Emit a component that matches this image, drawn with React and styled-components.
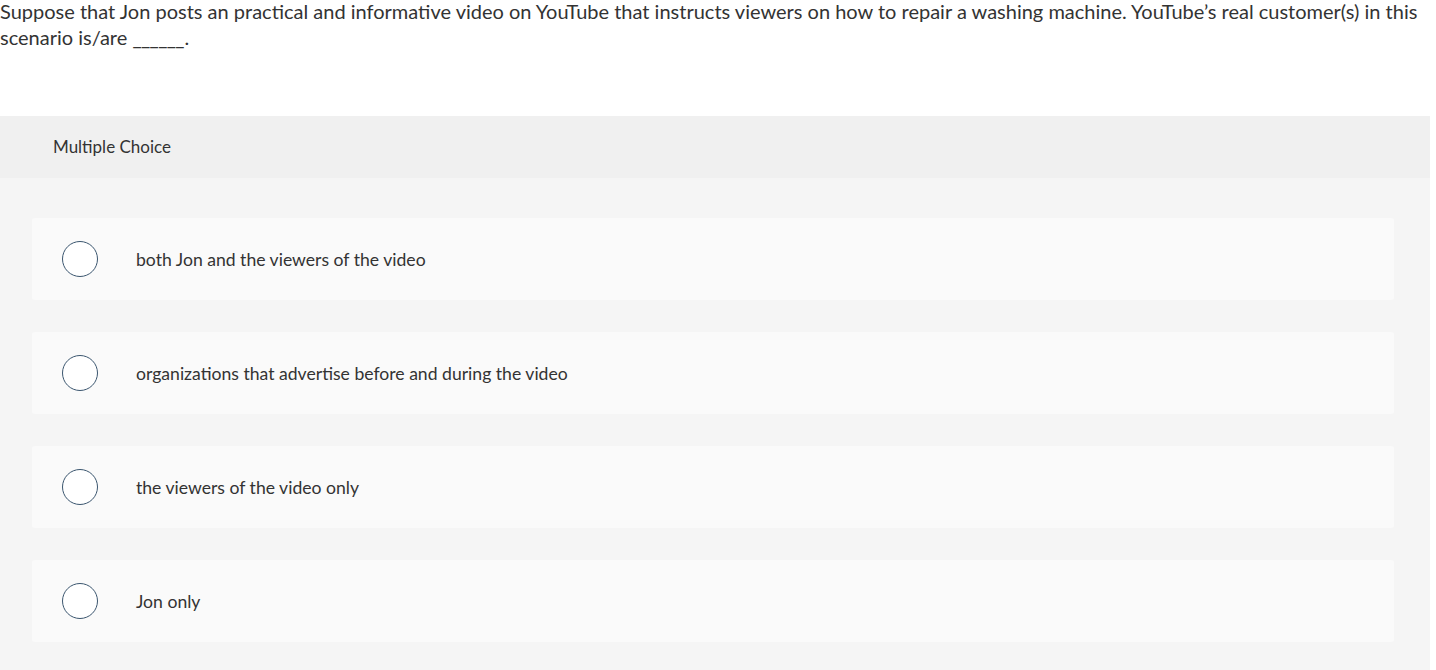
import React from "react";
import styled, { createGlobalStyle } from "styled-components";

const GlobalStyle = createGlobalStyle`
  html, body {
    margin: 0;
    padding: 0;
    background: #fff;
  }
  body {
    font-family: Lato, "Open Sans", Arial, sans-serif;
    color: #333;
  }
`;

const options = [
  "both Jon and the viewers of the video",
  "organizations that advertise before and during the video",
  "the viewers of the video only",
  "Jon only",
];

export default function App() {
  return (
    <>
      <GlobalStyle />
      <Page>
        <Question>
          Suppose that Jon posts an practical and informative video on YouTube that instructs viewers
          on how to repair a washing machine. YouTube’s real customer(s) in this{" "}
          <NoWrap>
            scenario is/are <Blank>______</Blank>.
          </NoWrap>
        </Question>
        <Panel>
          <PanelHeader>Multiple Choice</PanelHeader>
          <OptionList>
            {options.map((text) => (
              <Option key={text}>
                <Radio />
                <OptionText>{text}</OptionText>
              </Option>
            ))}
          </OptionList>
        </Panel>
      </Page>
    </>
  );
}

const Page = styled.div`
  width: 1436px;
  height: 670px;
  overflow: hidden;
`;

const Question = styled.p`
  margin: -2px 0 0;
  width: 1430px;
  height: 118px;
  font-size: 20px;
  line-height: 26px;
  color: #333;
`;

const NoWrap = styled.span`
  white-space: nowrap;
`;

const Blank = styled.span`
  letter-spacing: -0.6px;
  margin-right: 0.6px;
`;

const Panel = styled.div`
  width: 1430px;
  background: #f5f5f5;
  padding-bottom: 40px;
`;

const PanelHeader = styled.div`
  height: 60px;
  padding-bottom: 2px;
  background: #f0f0f0;
  display: flex;
  align-items: center;
  padding-left: 53px;
  font-size: 17px;
  color: #333;
`;

const OptionList = styled.div`
  display: flex;
  flex-direction: column;
  gap: 32px;
  padding: 40px 36px 0 32px;
`;

const Option = styled.div`
  height: 82px;
  background: #fafafa;
  border-radius: 3px;
  display: flex;
  align-items: center;
  padding-left: 30px;
`;

const Radio = styled.span`
  box-sizing: border-box;
  width: 36px;
  height: 36px;
  border-radius: 50%;
  border: 1.5px solid #3b566f;
  background: #fff;
  flex-shrink: 0;
`;

const OptionText = styled.span`
  margin-left: 38px;
  font-size: 17.6px;
  color: #333;
`;
